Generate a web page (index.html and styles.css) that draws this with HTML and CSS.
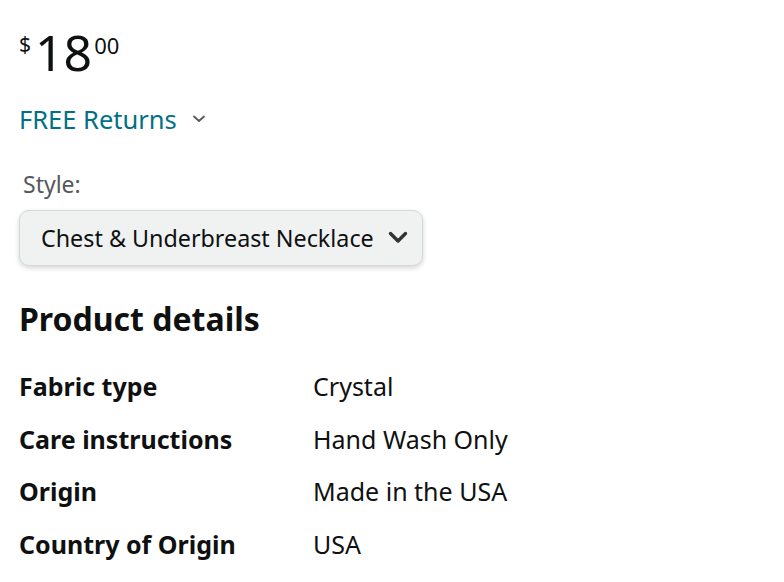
FILE: index.html
```html
<!DOCTYPE html>
<html>
<head>
<meta charset="utf-8">
<link rel="stylesheet" href="styles.css">
</head>
<body>
<div class="page">
  <div class="price">
    <span class="sym">$</span><span class="whole">18</span><span class="frac">00</span>
  </div>
  <div class="returns">
    <span>FREE Returns</span>
    <svg class="chev-sm" width="14" height="10" viewBox="0 0 14 10"><path d="M2 2.5 L7 7 L12 2.5" fill="none" stroke="#565959" stroke-width="1.8" stroke-linecap="round" stroke-linejoin="round"/></svg>
  </div>
  <div class="style-label">Style:</div>
  <div class="dropdown">
    <span class="dd-text">Chest &amp; Underbreast Necklace</span>
    <svg class="chev" width="20" height="14" viewBox="0 0 20 14"><path d="M2.5 2.5 L10 10 L17.5 2.5" fill="none" stroke="#333" stroke-width="3.4" stroke-linecap="round" stroke-linejoin="round"/></svg>
  </div>
  <h2 class="title">Product details</h2>
  <div class="details">
    <div class="k">Fabric type</div><div class="v">Crystal</div>
    <div class="k">Care instructions</div><div class="v">Hand Wash Only</div>
    <div class="k">Origin</div><div class="v">Made in the USA</div>
    <div class="k">Country of Origin</div><div class="v">USA</div>
  </div>
</div>
</body>
</html>
```
FILE: styles.css
```css
html, body { margin: 0; padding: 0; background: #fff; }
body { font-family: "Noto Sans", "Liberation Sans", sans-serif; color: #0f1111; }
.page { padding: 26px 19px 0 19px; }
.price { display: flex; align-items: flex-start; line-height: 1; height: 59px; }
.sym { font-size: 21px; margin-top: 8px; margin-right: 4px; }
.whole { font-size: 50px; line-height: 1; margin-top: 1px; }
.frac { font-size: 22px; margin-top: 8px; margin-left: 2px; }
.returns { display: flex; align-items: center; gap: 15px; margin-top: 18px; color: #007185; font-size: 25.5px; line-height: 32px; }
.style-label { margin-top: 35px; margin-left: 4px; color: #565959; font-size: 23px; line-height: 28px; }
.dropdown { margin-top: 12px; width: 404px; height: 56px; box-sizing: border-box; background: #f0f2f2; border: 1px solid #d5d9d9; border-radius: 10px; box-shadow: 0 2px 5px rgba(15,17,17,0.18); display: flex; align-items: center; justify-content: space-between; padding: 0 14px 0 21px; font-size: 23.3px; }
.title { margin: 33px 0 0 0; font-size: 32px; font-weight: 700; line-height: 40px; }
.details { margin-top: 31px; display: grid; grid-template-columns: 294px 1fr; row-gap: 20px; font-size: 25px; line-height: 32.5px; }
.k { font-weight: 700; }
```
